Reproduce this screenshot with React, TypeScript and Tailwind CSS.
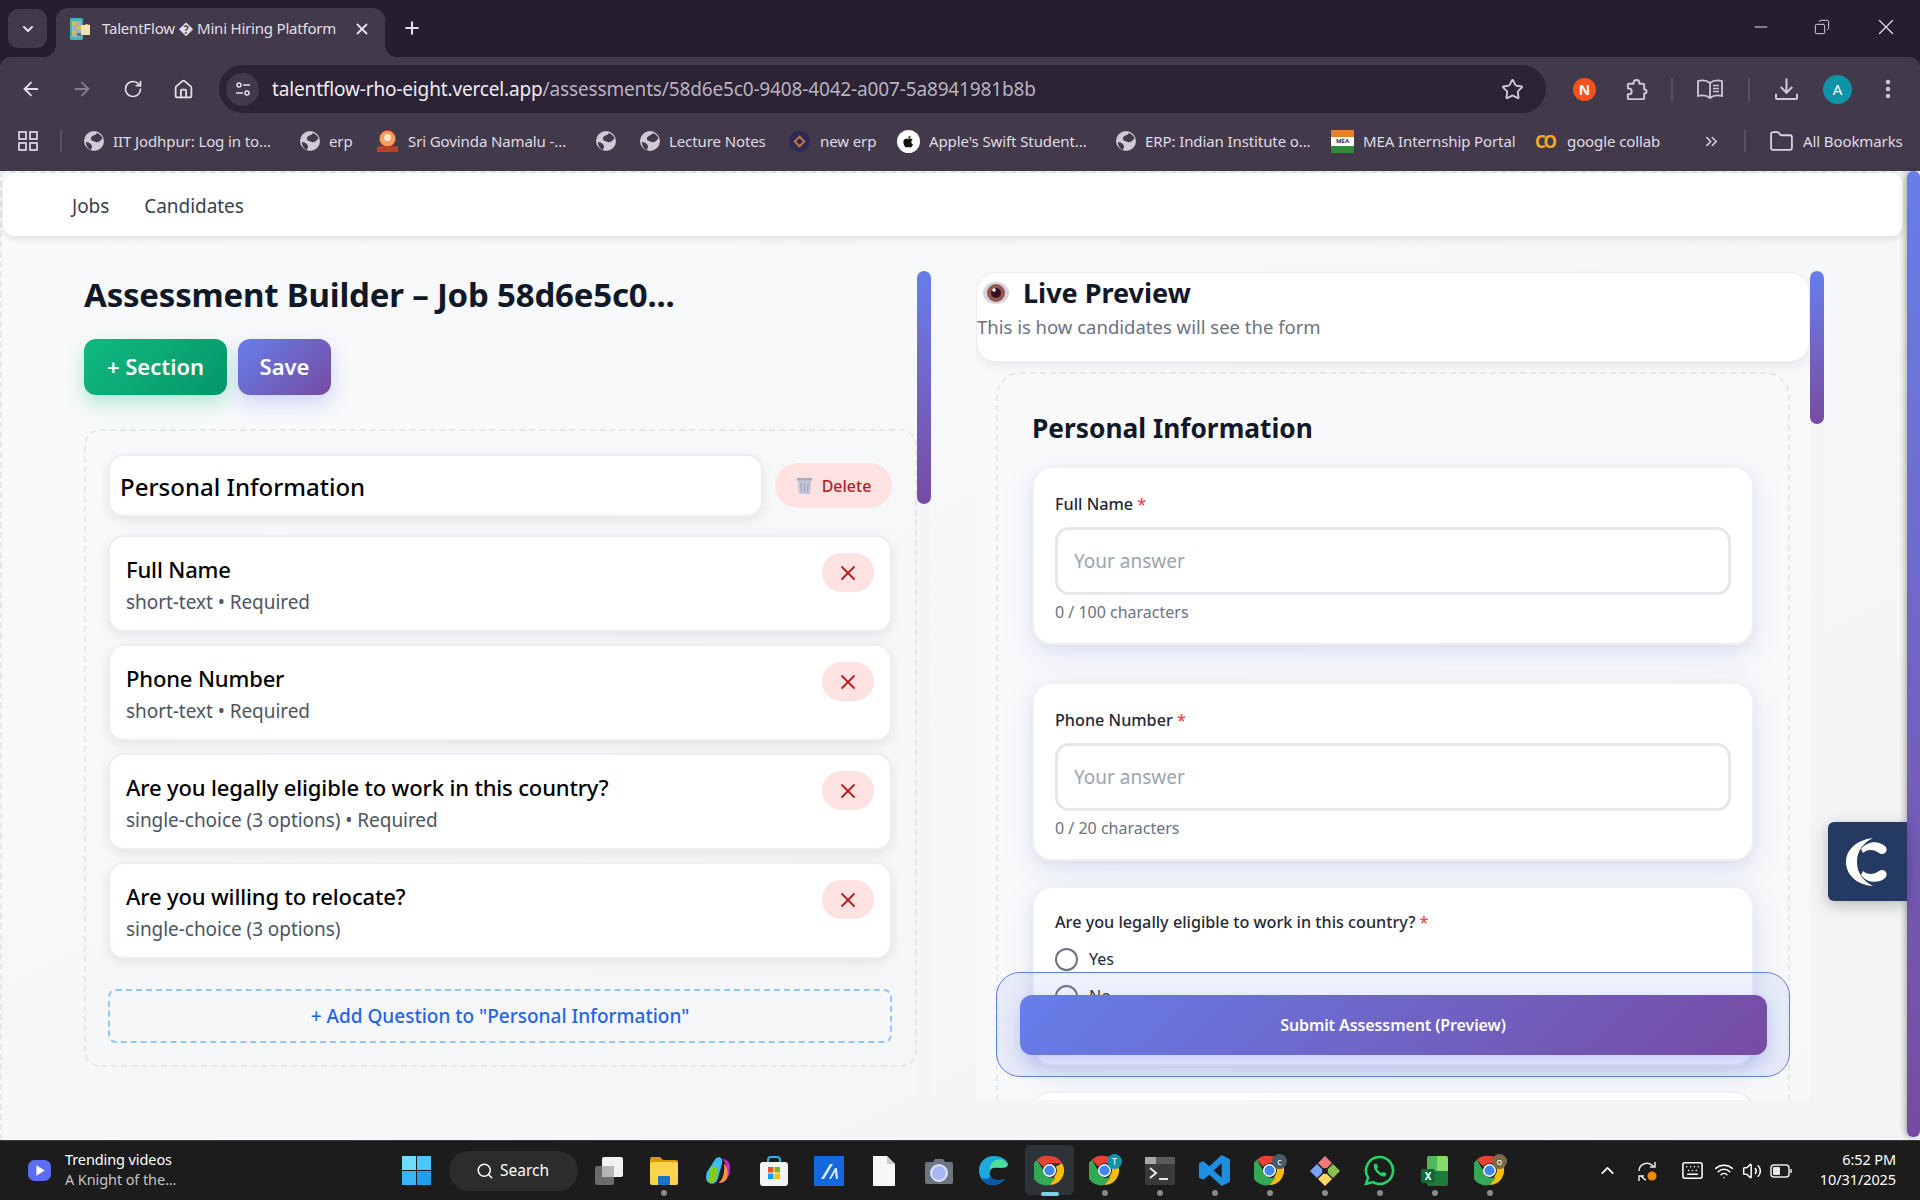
import {
  ArrowLeft, ArrowRight, ChevronDown, ChevronUp, ChevronsRight, Copy, EllipsisVertical, Folder,
  House, Keyboard, Minus, Plus, RotateCw, Search, Star, Volume2, Wifi, X,
} from 'lucide-react'

const ui = "[font-family:'Noto_Sans',sans-serif]"

function Globe({ className = '' }: { className?: string }) {
  return (
    <svg viewBox="0 0 20 20" className={className}>
      <circle cx="10" cy="10" r="10" fill="#cfcad3" />
      <path d="M13 2C11 5 8 4 7 7c-1 3 3 3 5 4 3 1 5-2 6.500-4C17 4 15 3 13 2zM2 11c2 0 5 1 6 4 0 2-1 3-1 4-3-1-5-4-5-8z" fill="#423a4b" />
    </svg>
  )
}

function ChromeIcon({ badge, badgeColor }: { badge?: string; badgeColor?: string }) {
  return (
    <div className="relative w-[31px] h-[31px]">
      <svg viewBox="0 0 32 32" className="w-[31px] h-[31px]">
        <path d="M16 1a15 15 0 0 1 13 7.500H16a7.500 7.500 0 0 0-6.500 3.700L3 4.800A15 15 0 0 1 16 1z" fill="#ea4335" />
        <path d="M29 8.500A15 15 0 0 1 16 31l6.500-11.200A7.500 7.500 0 0 0 22.500 12z" fill="#fbbc04" />
        <path d="M16 31A15 15 0 0 1 3 4.800l6.500 11.300A7.500 7.500 0 0 0 16 23.500h6.500z" fill="#34a853" />
        <circle cx="16" cy="16" r="6" fill="#4285f4" stroke="#fff" strokeWidth="1.500" />
      </svg>
      {badge && (
        <div className={`absolute -top-[1px] -right-[2px] w-[15px] h-[15px] rounded-full text-[9px] leading-[15px] text-center text-white ${badgeColor}`}>{badge}</div>
      )}
    </div>
  )
}

const bookmarks = [
  { icon: 'globe', label: 'IIT Jodhpur: Log in to...', w: 'w-[157px]', ml: 'ml-[22px]' },
  { icon: 'globe', label: 'erp', w: 'w-[24px]', ml: 'ml-[30px]' },
  { icon: 'sri', label: 'Sri Govinda Namalu -...', w: 'w-[159px]', ml: 'ml-[23px]' },
  { icon: 'globe', label: '', w: 'w-0', ml: 'ml-[29px]' },
  { icon: 'globe', label: 'Lecture Notes', w: 'w-[96px]', ml: 'ml-[24px]' },
  { icon: 'erp', label: 'new erp', w: 'w-[55px]', ml: 'ml-[23px]' },
  { icon: 'apple', label: "Apple's Swift Student...", w: 'w-[158px]', ml: 'ml-[22px]' },
  { icon: 'globe', label: 'ERP: Indian Institute o...', w: 'w-[161px]', ml: 'ml-[29px]' },
  { icon: 'mea', label: 'MEA Internship Portal', w: 'w-[148px]', ml: 'ml-[25px]' },
  { icon: 'co', label: 'google collab', w: 'w-[94px]', ml: 'ml-[24px]' },
]

function BookmarkIcon({ kind }: { kind: string }) {
  if (kind === 'globe') return <Globe className="w-[20px] h-[20px] shrink-0" />
  if (kind === 'sri') return (
    <svg viewBox="0 0 24 24" className="w-[23px] h-[23px] shrink-0">
      <circle cx="12" cy="9" r="8.500" fill="#f0a35e" stroke="#d8342a" />
      <circle cx="12" cy="8" r="3.500" fill="#fbe7cf" />
      <rect x="1" y="17" width="22" height="6" fill="#b8432a" />
    </svg>
  )
  if (kind === 'erp') return (
    <svg viewBox="0 0 24 24" className="w-[23px] h-[23px] shrink-0">
      <circle cx="12" cy="12" r="11" fill="#2f2a55" />
      <path d="M12 7l5 5-5 5-5-5z" fill="none" stroke="#b97a3a" strokeWidth="2" />
    </svg>
  )
  if (kind === 'apple') return (
    <div className="w-[23px] h-[23px] shrink-0 rounded-full bg-white flex items-center justify-center">
      <svg viewBox="0 0 24 24" className="w-[15px] h-[15px]">
        <path d="M16.500 12.600c0-2.300 1.900-3.400 2-3.500-1.100-1.600-2.800-1.800-3.400-1.800-1.400-.1-2.800.9-3.500.9s-1.900-.9-3.100-.8c-1.600 0-3.100.9-3.900 2.300-1.700 2.900-.4 7.200 1.200 9.500.8 1.100 1.700 2.400 3 2.400 1.200 0 1.600-.8 3.100-.8s1.900.8 3.100.8c1.300 0 2.100-1.100 2.900-2.300.9-1.300 1.300-2.600 1.300-2.700-.1 0-2.700-1-2.700-4zM14.200 5.800c.6-.8 1.100-1.900 1-3-.9 0-2.100.6-2.800 1.400-.6.700-1.100 1.800-1 2.900 1.100.1 2.100-.5 2.800-1.300z" fill="#111" />
      </svg>
    </div>
  )
  if (kind === 'mea') return (
    <div className="w-[23px] h-[23px] shrink-0 flex flex-col">
      <div className="h-[7px] bg-[#e8802a]" />
      <div className="h-[9px] bg-white text-[6px] leading-[9px] text-center font-bold text-[#1f2a6b]">MEA</div>
      <div className="h-[7px] bg-[#2f8a3a]" />
    </div>
  )
  return <div className="w-[23px] shrink-0 text-[17px] leading-[23px] font-bold tracking-[-2px] text-[#f9a825]">CO</div>
}

function WindowsLogo() {
  return (
    <svg viewBox="0 0 29 29" className="w-[29px] h-[29px]">
      <rect width="14" height="14" fill="#6fdcfb" />
      <rect x="15" width="14" height="14" fill="#4cc6f6" />
      <rect y="15" width="14" height="14" fill="#3bb5f2" />
      <rect x="15" y="15" width="14" height="14" fill="#1f9fe8" />
    </svg>
  )
}

function TaskIcon({ kind }: { kind: string }) {
  switch (kind) {
    case 'taskview':
      return (
        <svg viewBox="0 0 30 30" className="w-[30px] h-[30px]">
          <rect x="1" y="10" width="19" height="19" rx="2" fill="#6b6b6b" />
          <rect x="8" y="1" width="21" height="20" rx="2" fill="#f1f1f1" />
          <rect x="8" y="10" width="12" height="11" fill="#b5b5b5" />
        </svg>
      )
    case 'explorer':
      return (
        <svg viewBox="0 0 30 30" className="w-[30px] h-[30px]">
          <path d="M1 3a2 2 0 0 1 2-2h8l3 3h13a2 2 0 0 1 2 2v4H1z" fill="#d99a0b" />
          <rect x="1" y="6" width="28" height="23" rx="2" fill="#fbd34d" />
          <rect x="9" y="20" width="12" height="9" rx="1" fill="#1a73c9" />
        </svg>
      )
    case 'copilot':
      return (
        <svg viewBox="0 0 30 30" className="w-[30px] h-[30px]">
          <path d="M12 2c5-2 7 1 6 6l-4 14c-1 5-6 7-9 5-4-2-3-8-2-11z" fill="#38bdf8" />
          <path d="M6 14c2-6 8-4 8 1l-2 8c-1 4-6 5-8 2z" fill="#84cc16" />
          <path d="M18 3c6 0 9 4 8 12-1 7-6 13-12 12 4-2 6-7 7-13 1-5 0-9-3-11z" fill="#c026d3" />
          <path d="M20 8c4 3 5 10 2 16-2 2-5 3-7 3 4-4 6-11 5-19z" fill="#fb923c" />
        </svg>
      )
    case 'store':
      return (
        <svg viewBox="0 0 30 30" className="w-[30px] h-[30px]">
          <path d="M9 7V4a3 3 0 0 1 3-3h6a3 3 0 0 1 3 3v3" fill="none" stroke="#2bb3e8" strokeWidth="2" />
          <rect x="1" y="6" width="28" height="24" rx="3" fill="#f4f4f4" />
          <rect x="9" y="11" width="5.500" height="5.500" fill="#f25022" />
          <rect x="15.500" y="11" width="5.500" height="5.500" fill="#7fba00" />
          <rect x="9" y="17.500" width="5.500" height="5.500" fill="#00a4ef" />
          <rect x="15.500" y="17.500" width="5.500" height="5.500" fill="#ffb900" />
        </svg>
      )
    case 'blue':
      return (
        <svg viewBox="0 0 30 30" className="w-[30px] h-[30px]">
          <rect width="30" height="30" fill="#1368dd" />
          <path d="M7 23L16 8h3L10 23zM15 23l6-11h2l1 11h-2l-1-7-4 7z" fill="#d9ecff" />
        </svg>
      )
    case 'doc':
      return (
        <svg viewBox="0 0 22 30" className="w-[22px] h-[30px]">
          <path d="M0 0h14l8 8v22H0z" fill="#f7f7f7" />
          <path d="M14 0l8 8h-8z" fill="#c9c9c9" />
        </svg>
      )
    case 'camera':
      return (
        <svg viewBox="0 0 30 30" className="w-[30px] h-[30px]">
          <path d="M3 6h6l2-3h8l2 3h6a2 2 0 0 1 2 2v18a2 2 0 0 1-2 2H3a2 2 0 0 1-2-2V8a2 2 0 0 1 2-2z" fill="#6c7680" />
          <circle cx="15" cy="17" r="8" fill="#a9b8f5" stroke="#dbe3ff" strokeWidth="2" />
        </svg>
      )
    case 'edge':
      return (
        <svg viewBox="0 0 30 30" className="w-[31px] h-[31px]">
          <path d="M15 1C7 1 1 7 1 15c0 8 6 14 13 14 5 0 9-2 12-6-4 2-12 2-14-3-2-4 1-8 5-8 5 0 11 2 12-3C28 4 22 1 15 1z" fill="#1ea8e0" />
          <path d="M12 20c2 5 10 5 14 3-3 4-7 6-12 6-6 0-9-3-10-8 2 3 6 3 8-1z" fill="#0b5aa8" />
          <path d="M29 9c-1 5-7 3-12 3-3 0-5 1-6 3 0-7 5-11 10-11 3 0 6 2 8 5z" fill="#4fdc9b" />
        </svg>
      )
    case 'chrome':
      return <ChromeIcon />
    case 'chromeT':
      return <ChromeIcon badge="T" badgeColor="bg-[#0e94a8]" />
    case 'chromeC':
      return <ChromeIcon badge="c" badgeColor="bg-[#4a5a6a]" />
    case 'chromeP':
      return <ChromeIcon badge="o" badgeColor="bg-[#7a6a4a]" />
    case 'terminal':
      return (
        <svg viewBox="0 0 30 30" className="w-[30px] h-[30px]">
          <rect x="0" y="1" width="30" height="28" rx="2" fill="#3a3a3a" />
          <rect x="0" y="1" width="30" height="7" fill="#5b5b5b" />
          <rect x="0" y="1" width="11" height="7" fill="#a8a8a8" />
          <path d="M5 12l6 5-6 5" fill="none" stroke="#e8e8e8" strokeWidth="2" />
          <rect x="14" y="22" width="9" height="2" fill="#e8e8e8" />
        </svg>
      )
    case 'vscode':
      return (
        <svg viewBox="0 0 30 30" className="w-[31px] h-[31px]">
          <path d="M22 0l8 4v22l-8 4-12-11-6 5-4-2V8l4-2 6 5zM22 8l-8 7 8 7z" fill="#1d8fe1" />
        </svg>
      )
    case 'git':
      return (
        <svg viewBox="0 0 30 30" className="w-[30px] h-[30px]">
          <path d="M15 0l7 7-7 7-7-7z" fill="#ef7a7a" />
          <path d="M23 8l7 7-7 7-7-7z" fill="#8bc34a" />
          <path d="M15 16l7 7-7 7-7-7z" fill="#fdd663" />
          <path d="M7 8l7 7-7 7-7-7z" fill="#7aa2f7" />
          <circle cx="15" cy="15" r="3" fill="#222" />
        </svg>
      )
    case 'whatsapp':
      return (
        <svg viewBox="0 0 30 30" className="w-[31px] h-[31px]">
          <path d="M15 2a13 13 0 0 0-11 20l-2 6 6.500-1.800A13 13 0 1 0 15 2z" fill="none" stroke="#25d366" strokeWidth="2.500" />
          <path d="M10 9c1-1 2-1 2.500 0l1 2.500-1 1.500c1 2 2.500 3.500 4.500 4.500l1.500-1 2.500 1c1 .5.500 2-.5 3-3 2-12-5-11-10.500z" fill="#25d366" />
        </svg>
      )
    case 'excel':
      return (
        <div className="relative w-[27px] h-[30px]">
          <div className="absolute left-[6px] top-0 w-[21px] h-[30px] rounded-[2px] bg-[#1f7a3d]" />
          <div className="absolute left-[6px] top-0 w-[10px] h-[15px] rounded-tl-[2px] bg-[#4fb85f]" />
          <div className="absolute left-[16px] top-0 w-[11px] h-[15px] rounded-tr-[2px] bg-[#86d86b]" />
          <div className="absolute left-0 top-[13px] w-[14px] h-[14px] rounded-[2px] bg-[#0f6b36] text-white text-[10px] leading-[14px] font-bold text-center">X</div>
        </div>
      )
  }
  return null
}

const taskItems = [
  { kind: 'taskview', w: 'w-[30px]', ml: 'ml-[16px]' },
  { kind: 'explorer', w: 'w-[30px]', ml: 'ml-[25px]', dot: true },
  { kind: 'copilot', w: 'w-[30px]', ml: 'ml-[25px]' },
  { kind: 'store', w: 'w-[30px]', ml: 'ml-[25px]' },
  { kind: 'blue', w: 'w-[30px]', ml: 'ml-[25px]' },
  { kind: 'doc', w: 'w-[30px]', ml: 'ml-[25px]' },
  { kind: 'camera', w: 'w-[30px]', ml: 'ml-[25px]' },
  { kind: 'edge', w: 'w-[31px]', ml: 'ml-[24px]' },
  { kind: 'chrome', w: 'w-[31px]', ml: 'ml-[25px]', active: true },
  { kind: 'chromeT', w: 'w-[31px]', ml: 'ml-[24px]', dot: true },
  { kind: 'terminal', w: 'w-[31px]', ml: 'ml-[24px]', dot: true },
  { kind: 'vscode', w: 'w-[31px]', ml: 'ml-[24px]', dot: true },
  { kind: 'chromeC', w: 'w-[31px]', ml: 'ml-[24px]', dot: true },
  { kind: 'git', w: 'w-[31px]', ml: 'ml-[24px]', dot: true },
  { kind: 'whatsapp', w: 'w-[31px]', ml: 'ml-[24px]', dot: true },
  { kind: 'excel', w: 'w-[31px]', ml: 'ml-[24px]', dot: true },
  { kind: 'chromeP', w: 'w-[31px]', ml: 'ml-[24px]', dot: true },
]

const questions = [
  { title: 'Full Name', sub: 'short-text • Required' },
  { title: 'Phone Number', sub: 'short-text • Required' },
  { title: 'Are you legally eligible to work in this country?', sub: 'single-choice (3 options) • Required' },
  { title: 'Are you willing to relocate?', sub: 'single-choice (3 options)' },
]

function BrowserChrome() {
  return (
    <div className={`${ui} shrink-0 bg-[#261e2f] text-[#e4dfe8]`}>
      <div className="h-[57px] flex items-start">
        <div className="mt-[9px] ml-[8px] w-[39px] h-[39px] rounded-[10px] bg-[#423a4b] flex items-center justify-center">
          <ChevronDown size={16} strokeWidth={3} />
        </div>
        <div className="relative mt-[8px] ml-[9px] w-[329px] h-[49px] rounded-t-[12px] bg-[#423a4b] flex items-center pl-[13px] pr-[14px] pb-[8px]">
          <div className="absolute -left-[12px] bottom-0 w-[12px] h-[12px] bg-[radial-gradient(circle_at_0_0,transparent_12px,#423a4b_12px)]" />
          <div className="absolute -right-[12px] bottom-0 w-[12px] h-[12px] bg-[radial-gradient(circle_at_100%_0,transparent_12px,#423a4b_12px)]" />
          <svg viewBox="0 0 21 22" className="w-[21px] h-[22px] shrink-0">
            <rect x="1" y="0" width="13" height="22" rx="1.500" fill="#43b5b5" />
            <path d="M11 7h5l1-1 4 1v10h-9z" fill="#f6dfb2" />
            <rect x="3" y="3" width="9" height="16" fill="#9fb3b8" />
            <rect x="3" y="4" width="4" height="3" fill="#e9b92f" />
            <rect x="8" y="8" width="4" height="3" fill="#e9b92f" />
            <rect x="3" y="13" width="4" height="3" fill="#e9b92f" />
            <rect x="8" y="15" width="4" height="3" fill="#5d7480" />
          </svg>
          <span className="ml-[12px] text-[15px] tracking-[-0.2px] whitespace-nowrap">TalentFlow � Mini Hiring Platform</span>
          <X size={18} strokeWidth={2.5} className="ml-auto" />
        </div>
        <Plus size={20} strokeWidth={2.5} className="mt-[18px] ml-[17px]" />
        <div className="ml-auto flex items-center mt-[14px] mr-[21px] gap-[43px]">
          <Minus size={20} strokeWidth={1.2} />
          <Copy size={16} strokeWidth={1.4} className="-scale-x-100" />
          <X size={26} strokeWidth={1.2} />
        </div>
      </div>
      <div className="bg-[#423a4b] rounded-t-[10px] h-[114px] flex flex-col">
        <div className="h-[64px] shrink-0 flex items-center">
          <ArrowLeft size={22} strokeWidth={2} className="ml-[20px]" />
          <ArrowRight size={22} strokeWidth={2} className="ml-[29px] text-[#857d8c]" />
          <RotateCw size={20} strokeWidth={2} className="ml-[30px]" />
          <House size={21} strokeWidth={2} className="ml-[30px]" />
          <div className="ml-[25px] w-[1327px] h-[48px] rounded-full bg-[#2c2335] flex items-center pl-[7px] pr-[22px]">
            <div className="w-[33px] h-[33px] rounded-full bg-[#423a4b] flex items-center justify-center">
              <svg viewBox="0 0 16 16" className="w-[16px] h-[16px]" fill="none" stroke="#e4dfe8" strokeWidth="1.500">
                <circle cx="4" cy="4" r="2" />
                <path d="M8 4h7M1 12h7" />
                <circle cx="12" cy="12" r="2" />
              </svg>
            </div>
            <div className="ml-[13px] text-[19px] tracking-[-0.15px] whitespace-nowrap text-[#b9b3bf]">
              <span className="text-[#f0ecf3]">talentflow-rho-eight.vercel.app</span>/assessments/58d6e5c0-9408-4042-a007-5a8941981b8b
            </div>
            <Star size={23} strokeWidth={2} className="ml-auto text-[#d0c6da]" />
          </div>
          <div className="ml-[27px] w-[23px] h-[23px] rounded-full bg-[#f4511e] text-white text-[14px] font-bold leading-[23px] text-center">N</div>
          <svg viewBox="0 0 24 24" className="ml-[29px] w-[23px] h-[23px]" fill="none" stroke="#d0c6da" strokeWidth="2" strokeLinejoin="round">
            <path d="M3 7a1 1 0 0 1 1-1h5V5a3 3 0 0 1 6 0v1h4a1 1 0 0 1 1 1v5h.5a2 2 0 0 1 0 4H20v5a1 1 0 0 1-1 1H4a1 1 0 0 1-1-1v-4h1a3 3 0 0 0 0-6H3z" />
          </svg>
          <div className="ml-[23px] w-[2px] h-[23px] bg-[#5a5263]" />
          <svg viewBox="0 0 26 20" className="ml-[24px] w-[26px] h-[20px]" fill="none" stroke="#d0c6da" strokeWidth="1.800">
            <path d="M13 4C10 1.500 5 1 1 2v15c4-1 9-.5 12 2 3-2.500 8-3 12-2V2c-4-1-9-.5-12 2zM13 4v15" />
            <path d="M16 6.500h6M16 9.500h6M16 12.500h6" strokeWidth="1.400" />
          </svg>
          <div className="ml-[25px] w-[2px] h-[23px] bg-[#5a5263]" />
          <svg viewBox="0 0 24 24" className="ml-[25px] w-[23px] h-[24px]" fill="none" stroke="#d0c6da" strokeWidth="2.200">
            <path d="M12 1v14M6 10l6 6 6-6M1 17v4a1.500 1.500 0 0 0 1.500 1.500h19A1.500 1.500 0 0 0 23 21v-4" />
          </svg>
          <div className="ml-[25px] w-[29px] h-[29px] rounded-full bg-[#0e94a8] text-white text-[15px] leading-[29px] text-center">A</div>
          <EllipsisVertical size={24} strokeWidth={2.5} className="ml-[24px] text-[#d0c6da]" />
        </div>
        <div className="h-[50px] flex items-center text-[15px] tracking-[-0.1px] text-[#e0dbe4] pb-[10px]">
          <svg viewBox="0 0 20 20" className="ml-[18px] w-[20px] h-[20px]" fill="none" stroke="#d9d2e0" strokeWidth="1.800">
            <rect x="1" y="1" width="7" height="7" />
            <rect x="12" y="1" width="7" height="7" />
            <rect x="1" y="12" width="7" height="7" />
            <rect x="12" y="12" width="7" height="7" />
          </svg>
          <div className="ml-[22px] w-[2px] h-[22px] bg-[#5a5263]" />
          {bookmarks.map((b, i) => (
            <div key={i} className={`flex items-center ${b.ml}`}>
              <BookmarkIcon kind={b.icon} />
              {b.label && <span className={`ml-[9px] whitespace-nowrap ${b.w}`}>{b.label}</span>}
            </div>
          ))}
          <ChevronsRight size={19} strokeWidth={1.8} className="ml-[41px]" />
          <div className="ml-[23px] w-[2px] h-[22px] bg-[#5a5263]" />
          <Folder size={25} strokeWidth={1.7} className="ml-[23px] text-[#d9d2e0]" />
          <span className="ml-[9px] whitespace-nowrap">All Bookmarks</span>
        </div>
      </div>
    </div>
  )
}

function BuilderPanel() {
  return (
    <div className="w-[833px] shrink-0">
      <h1 className="h-[48px] flex items-center text-[33px] leading-[48px] font-bold text-[#111827] tracking-[-0.2px] whitespace-nowrap">Assessment Builder – Job 58d6e5c0...</h1>
      <div className="mt-[20px] flex gap-[11px] items-start">
        <button className="w-[143px] h-[56px] pb-[2px] rounded-[12px] text-white text-[22px] font-semibold bg-linear-135/srgb from-[#10b981] to-[#059669] shadow-[0_8px_20px_rgba(16,185,129,0.3)]">+ Section</button>
        <button className="w-[93px] h-[56px] pb-[2px] rounded-[12px] text-white text-[22px] font-semibold bg-linear-135/srgb from-[#667eea] to-[#764ba2] shadow-[0_8px_20px_rgba(102,126,234,0.3)]">Save</button>
      </div>
      <section className="mt-[34px] h-[638px] rounded-[16px] border-2 border-dashed border-[#e5e7eb] pl-[22px] pr-[23px] pt-[23px] flex flex-col">
        <div className="flex items-center gap-[12px]">
          <div className="w-[655px] h-[63px] rounded-[16px] bg-white border-2 border-[#eceef1] shadow-[0_4px_12px_rgba(0,0,0,0.08)] flex items-center pl-[10px] pt-[2px] text-[24px] font-medium text-black">Personal Information</div>
          <button className="w-[117px] h-[45px] rounded-full bg-[#fee2e2] flex items-center justify-center gap-[9px] text-[#b91c1c] text-[16px] font-medium">
            <svg viewBox="0 0 18 18" className="w-[17px] h-[17px]">
              <rect x="1" y="1" width="16" height="3" fill="#a8a8c0" />
              <path d="M2 4h14l-1 14H3z" fill="#c6c6d8" />
              <path d="M5 6l1 10M9 6v10M13 6l-1 10" stroke="#9c9cb4" strokeWidth="1" />
            </svg>
            Delete
          </button>
        </div>
        <div className="mt-[18px] flex flex-col gap-[12px]">
          {questions.map((q) => (
            <div key={q.title} className="h-[97px] rounded-[16px] bg-white border-2 border-[#eceef1] shadow-[0_4px_12px_rgba(0,0,0,0.08)] pl-[16px] pr-[16px] flex justify-between items-start">
              <div className="pt-[16px]">
                <div className="text-[22px] leading-[32px] tracking-[-0.15px] font-medium text-black">{q.title}</div>
                <div className="mt-[3px] text-[19px] leading-[28px] tracking-[-0.05px] text-[#4b5563]">{q.sub}</div>
              </div>
              <button className="mt-[16px] w-[52px] h-[39px] rounded-full bg-[#fee2e2] flex items-center justify-center text-[#b91c1c]">
                <X size={24} strokeWidth={1.8} />
              </button>
            </div>
          ))}
        </div>
        <button className="mt-[30px] h-[54px] rounded-[8px] border-2 border-dashed border-[#93c5fd] text-[#2563eb] text-[19px] font-medium">+ Add Question to "Personal Information"</button>
      </section>
    </div>
  )
}

function PreviewCard({ label, count, mt }: { label: string; count: string; mt: string }) {
  return (
    <div className={`${mt} h-[179px] rounded-[20px] bg-white border-2 border-[#eef0f3] shadow-[0_10px_30px_rgba(102,126,234,0.15),0_4px_12px_rgba(0,0,0,0.05)] px-[21px] pt-[22px]`}>
      <div className="h-[28px] leading-[28px] text-[16.200px] font-medium text-[#1f2937]">{label} <span className="text-[#ef4444]">*</span></div>
      <div className="mt-[9px] h-[68px] rounded-[14px] border-[3px] border-[#e5e7eb] flex items-center pl-[16px] text-[19px] text-[#9ca3af]">Your answer</div>
      <div className="mt-[6px] text-[16px] leading-[22px] text-[#6b7280]">{count}</div>
    </div>
  )
}

function PreviewPanel() {
  return (
    <div className="w-[834px] shrink-0 h-[829px] overflow-hidden bg-white/30">
      <div className="h-[90px] mt-[1px] rounded-[20px] bg-white border border-[#eceef1] shadow-[0_4px_12px_rgba(0,0,0,0.08)]">
        <h2 className="h-[40px] flex items-center text-[27px] font-bold text-[#111827] pl-[4px]">
          <svg viewBox="0 0 30 24" className="w-[30px] h-[24px] mr-[12px]">
            <ellipse cx="15" cy="12" rx="13" ry="11" fill="#d8d3dc" />
            <circle cx="15" cy="12" r="9" fill="#8e5a52" />
            <circle cx="15" cy="12" r="5" fill="#3a0f1e" />
            <circle cx="13" cy="9" r="1.800" fill="#fff" />
          </svg>
          Live Preview
        </h2>
        <div className="mt-[-1px] text-[18.500px] leading-[30px] text-[#6b7280]">This is how candidates will see the form</div>
      </div>
      <div className="mx-[20px] mt-[10px] rounded-t-[24px] border-2 border-b-0 border-dashed border-[#e5e7eb] h-[800px] px-[34px] pt-[25px]">
        <h3 className="h-[60px] flex items-center text-[26.300px] font-bold text-[#111827]">Personal Information</h3>
        <PreviewCard mt="mt-[7px]" label="Full Name" count="0 / 100 characters" />
        <PreviewCard mt="mt-[37px]" label="Phone Number" count="0 / 20 characters" />
        <div className="mt-[25px] h-[180px] rounded-[20px] bg-white border-2 border-[#eef0f3] shadow-[0_10px_30px_rgba(102,126,234,0.15),0_4px_12px_rgba(0,0,0,0.05)] px-[21px] pt-[16px]">
          <div className="h-[36px] leading-[36px] text-[16.200px] font-medium text-[#1f2937]">Are you legally eligible to work in this country? <span className="text-[#ef4444]">*</span></div>
          <div className="mt-[5px] flex flex-col gap-[9px]">
            {['Yes', 'No'].map((o) => (
              <div key={o} className="h-[28px] flex items-center gap-[11px] text-[16px] text-[#1f2937]">
                <div className="w-[23px] h-[23px] rounded-full border-2 border-[#6b7280]" />
                {o}
              </div>
            ))}
          </div>
        </div>
        <div className="mt-[25px] h-[100px] rounded-[20px] bg-white border-2 border-[#eef0f3]" />
      </div>
    </div>
  )
}

function ScrollTrack({ thumb }: { thumb: string }) {
  return (
    <div className="w-[14px] shrink-0 h-[829px] bg-[#f1f3f6]/50 rounded-b-[7px]">
      <div className={`w-[14px] ${thumb} rounded-full bg-linear-to-b from-[#667eea] to-[#764ba2]`} />
    </div>
  )
}

function Taskbar() {
  return (
    <div className={`${ui} relative h-[60px] shrink-0 bg-[#1c1c1c] border-t border-[#3a3a3a] flex items-center text-white`}>
      <svg viewBox="0 0 24 24" className="ml-[27px] w-[25px] h-[25px]">
        <rect x="1" y="2" width="22" height="20" rx="6" fill="#5b6cf5" />
        <path d="M9 7l8 5-8 5z" fill="#fff" />
      </svg>
      <div className="ml-[13px] mb-[3px] w-[337px] text-[14.500px] leading-[20px] tracking-[-0.1px]">
        <div>Trending videos</div>
        <div className="text-[#c4c4c4]">A Knight of the...</div>
      </div>
      <WindowsLogo />
      <div className="ml-[18px] w-[129px] h-[40px] rounded-full bg-[#2c2c2c] flex items-center pl-[27px] gap-[6px] text-[15.500px]">
        <Search size={18} strokeWidth={2} />Search
      </div>
      {taskItems.map((t) => (
        <div key={t.kind} className={`relative flex justify-center ${t.w} ${t.ml}`}>
          {t.active && <div className="absolute -inset-x-[9px] -top-[10px] h-[50px] rounded-[5px] bg-[#2e3338]" />}
          <div className="relative"><TaskIcon kind={t.kind} /></div>
          {t.dot && <div className="absolute -bottom-[10px] w-[6px] h-[6px] rounded-full bg-[#8a8a8a]" />}
          {t.active && <div className="absolute -bottom-[10px] w-[18px] h-[4px] rounded-full bg-[#76d5e5]" />}
        </div>
      ))}
      <ChevronUp size={21} strokeWidth={2} className="ml-[92px]" />
      <svg viewBox="0 0 24 24" className="ml-[17px] w-[24px] h-[24px]" fill="none" stroke="#e8e8e8" strokeWidth="1.500">
        <path d="M4 12a8 8 0 0 1 13-6l2 2M20 3v5h-5M6 17l2 2a8 8 0 0 0 3 2M4 22v-5h5" />
        <circle cx="17" cy="17" r="4.500" fill="#f08a00" stroke="none" />
      </svg>
      <Keyboard size={23} strokeWidth={1.6} className="ml-[22px]" />
      <Wifi size={20} strokeWidth={1.8} className="ml-[10px]" />
      <Volume2 size={20} strokeWidth={1.8} className="ml-[8px]" />
      <svg viewBox="0 0 22 14" className="ml-[8px] w-[22px] h-[14px]" fill="none" stroke="#e8e8e8" strokeWidth="1.500">
        <rect x="1" y="1" width="18" height="12" rx="3" />
        <rect x="3" y="3" width="7" height="8" rx="1" fill="#e8e8e8" stroke="none" />
        <path d="M21 5v4" />
      </svg>
      <div className="ml-auto mr-[24px] mb-[3px] text-right text-[14.500px] leading-[20px] tracking-[-0.1px]">
        <div>6:52 PM</div>
        <div>10/31/2025</div>
      </div>
    </div>
  )
}

export default function App() {
  return (
    <div className="h-screen w-[1920px] overflow-hidden flex flex-col">
      <BrowserChrome />
      <main className={`${ui} relative flex-1 min-h-0 flex bg-linear-to-br from-[#f9fafc] to-[#f3f4f6]`}>
        <div className="flex-1 min-w-0 flex flex-col border-l-2 border-t-2 border-dashed border-[#e5e7eb]">
          <nav className="ml-[1px] mr-[4px] h-[63px] rounded-[12px] bg-white shadow-[0_2px_8px_rgba(0,0,0,0.12)] flex items-center pl-[69px] pt-[4px] gap-[35px] text-[19px] tracking-[-0.05px] text-[#374151]">
            <span>Jobs</span>
            <span>Candidates</span>
          </nav>
          <div className="mt-[35px] pl-[82px] flex">
            <BuilderPanel />
            <ScrollTrack thumb="h-[233px]" />
            <div className="ml-[45px]"><PreviewPanel /></div>
            <ScrollTrack thumb="h-[153px]" />
          </div>
        </div>
        <div className="w-[13px] shrink-0 mb-[3px] rounded-[6px] bg-linear-to-b from-[#667eea] to-[#764ba2] shadow-[-2px_0_6px_rgba(0,0,0,0.3)]" />
        <div className="absolute left-[996px] top-[801px] w-[794px] h-[105px] rounded-[24px] border border-[#667eea] bg-[#667eea]/10 flex items-center justify-center">
          <button className="w-[747px] h-[60px] rounded-[12px] text-white text-[16px] tracking-[-0.1px] font-semibold bg-linear-135/srgb from-[#667eea] to-[#764ba2] shadow-[0_8px_20px_rgba(102,126,234,0.3)]">Submit Assessment (Preview)</button>
        </div>
        <div className="absolute left-[1828px] top-[651px] w-[79px] h-[79px] rounded-l-[6px] bg-[#243a63] shadow-[0_4px_16px_rgba(0,0,0,0.25)] flex items-center justify-center">
          <svg viewBox="0 0 44 48" className="w-[44px] h-[48px]">
            <path d="M27 0C10 2 0 12 0 24c0 13 11 23 27 24-10-5-16-13-16-24S17 5 27 0z" fill="#fff" />
            <path d="M15 11C21 3 32 2 39 8a4.500 4.500 0 0 1-6 7c-5-4-12-4-16 0z" fill="#fff" />
            <path d="M15 37c6 8 17 9 24 3a4.500 4.500 0 0 0-6-7c-5 4-12 4-16 0z" fill="#fff" />
          </svg>
        </div>
      </main>
      <Taskbar />
    </div>
  )
}
